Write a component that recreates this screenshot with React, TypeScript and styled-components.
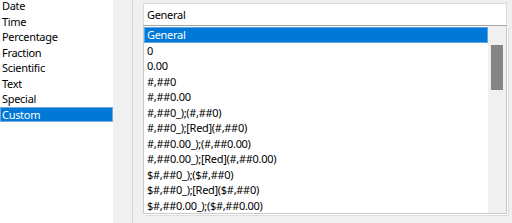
import styled, { createGlobalStyle } from "styled-components";

const GlobalStyle = createGlobalStyle`
  html, body {
    margin: 0;
    padding: 0;
  }
  body {
    font-family: "Noto Sans", "Open Sans", sans-serif;
    font-size: 11px;
    letter-spacing: -0.3px;
    color: #000;
  }
`;

const categories = [
  "Date",
  "Time",
  "Percentage",
  "Fraction",
  "Scientific",
  "Text",
  "Special",
  "Custom",
];

const formats = [
  "General",
  "0",
  "0.00",
  "#,##0",
  "#,##0.00",
  "#,##0_);(#,##0)",
  "#,##0_);[Red](#,##0)",
  "#,##0.00_);(#,##0.00)",
  "#,##0.00_);[Red](#,##0.00)",
  "$#,##0_);($#,##0)",
  "$#,##0_);[Red]($#,##0)",
  "$#,##0.00_);($#,##0.00)",
];

const App = () => {
  return (
    <>
      <GlobalStyle />
      <Dialog>
        <CategoryList>
          <CategoryScroll>
            {categories.map((c) => (
              <Item key={c} $selected={c === "Custom"}>
                {c}
              </Item>
            ))}
          </CategoryScroll>
        </CategoryList>
        <Gutter>
          <Divider />
        </Gutter>
        <TypePanel>
          <TypeInput>General</TypeInput>
          <FormatList>
            <FormatRows>
              {formats.map((f) => (
                <FormatItem key={f} $selected={f === "General"}>
                  {f}
                </FormatItem>
              ))}
            </FormatRows>
            <ScrollBar>
              <Thumb />
            </ScrollBar>
          </FormatList>
        </TypePanel>
      </Dialog>
    </>
  );
};

export default App;

const Dialog = styled.div`
  display: flex;
  width: 512px;
  height: 223px;
  background: #f0f0f0;
  overflow: hidden;
`;

const CategoryList = styled.div`
  width: 113px;
  height: 100%;
  background: #fff;
  overflow: hidden;
`;

const CategoryScroll = styled.div`
  margin-top: -2px;
`;

const Item = styled.div<{ $selected?: boolean }>`
  height: 15.5px;
  line-height: 15px;
  padding-left: 2px;
  white-space: nowrap;
  box-sizing: border-box;
  background: ${(p) => (p.$selected ? "#0078d7" : "transparent")};
  color: ${(p) => (p.$selected ? "#fff" : "#000")};
  outline: ${(p) => (p.$selected ? "1px solid #7aa6d8" : "none")};
  outline-offset: -1px;
`;

const Gutter = styled.div`
  width: 30px;
  display: flex;
  justify-content: flex-start;
  padding-left: 19px;
  box-sizing: border-box;
`;

const Divider = styled.div`
  width: 1px;
  height: 100%;
  background: #d6d6d6;
`;

const TypePanel = styled.div`
  width: 364px;
  padding-top: 3px;
  display: flex;
  flex-direction: column;
`;

const TypeInput = styled.div`
  height: 23px;
  box-sizing: border-box;
  background: #fff;
  border: 1px solid #dadada;
  border-bottom: 1px solid #a3a3a3;
  padding-left: 3px;
  line-height: 21px;
`;

const FormatList = styled.div`
  height: 188px;
  box-sizing: border-box;
  background: #fff;
  border: 1px solid #c9c9c9;
  border-top: none;
  box-shadow: 1px 1px 0 #fff, 2px 2px 0 #dcdcdc;
  display: flex;
`;

const FormatRows = styled.div`
  flex: 1;
  padding-top: 1px;
  overflow: hidden;
`;

const FormatItem = styled.div<{ $selected?: boolean }>`
  height: 15.5px;
  line-height: 16px;
  padding-left: 3px;
  white-space: nowrap;
  box-sizing: border-box;
  background: ${(p) => (p.$selected ? "#0078d7" : "transparent")};
  color: ${(p) => (p.$selected ? "#fff" : "#000")};
  outline: ${(p) => (p.$selected ? "1px solid #5ea6e6" : "none")};
  outline-offset: -1px;
`;

const ScrollBar = styled.div`
  width: 18px;
  background: #f0f0f0;
  display: flex;
  justify-content: center;
`;

const Thumb = styled.div`
  width: 12px;
  height: 45px;
  margin-top: 19px;
  background: #858585;
`;
